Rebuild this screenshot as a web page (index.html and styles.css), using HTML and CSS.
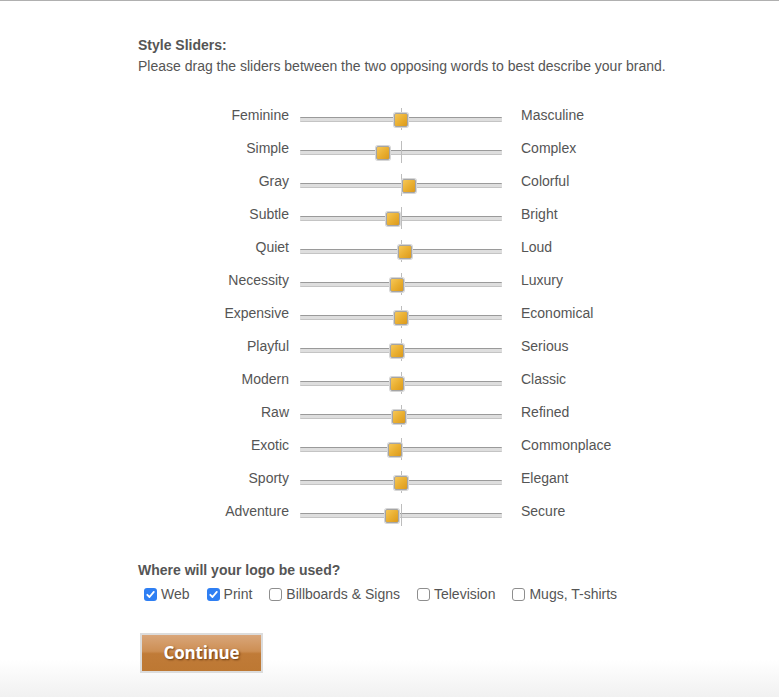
FILE: index.html
```html
<!DOCTYPE html>
<html>
<head>
<meta charset="utf-8">
<link rel="stylesheet" href="styles.css">
</head>
<body>
<div class="page">
  <h2 class="title">Style Sliders:</h2>
  <p class="intro">Please drag the sliders between the two opposing words to best describe your brand.</p>

  <div class="sliders">
    <div class="row"><span class="left">Feminine</span><div class="slider"><span class="bar"></span><span class="tick"></span><span class="thumb" style="left:94px"></span></div><span class="right">Masculine</span></div>
    <div class="row"><span class="left">Simple</span><div class="slider"><span class="bar"></span><span class="tick"></span><span class="thumb" style="left:76px"></span></div><span class="right">Complex</span></div>
    <div class="row"><span class="left">Gray</span><div class="slider"><span class="bar"></span><span class="tick"></span><span class="thumb" style="left:102px"></span></div><span class="right">Colorful</span></div>
    <div class="row"><span class="left">Subtle</span><div class="slider"><span class="bar"></span><span class="tick"></span><span class="thumb" style="left:86px"></span></div><span class="right">Bright</span></div>
    <div class="row"><span class="left">Quiet</span><div class="slider"><span class="bar"></span><span class="tick"></span><span class="thumb" style="left:98px"></span></div><span class="right">Loud</span></div>
    <div class="row"><span class="left">Necessity</span><div class="slider"><span class="bar"></span><span class="tick"></span><span class="thumb" style="left:90px"></span></div><span class="right">Luxury</span></div>
    <div class="row"><span class="left">Expensive</span><div class="slider"><span class="bar"></span><span class="tick"></span><span class="thumb" style="left:94px"></span></div><span class="right">Economical</span></div>
    <div class="row"><span class="left">Playful</span><div class="slider"><span class="bar"></span><span class="tick"></span><span class="thumb" style="left:90px"></span></div><span class="right">Serious</span></div>
    <div class="row"><span class="left">Modern</span><div class="slider"><span class="bar"></span><span class="tick"></span><span class="thumb" style="left:90px"></span></div><span class="right">Classic</span></div>
    <div class="row"><span class="left">Raw</span><div class="slider"><span class="bar"></span><span class="tick"></span><span class="thumb" style="left:92px"></span></div><span class="right">Refined</span></div>
    <div class="row"><span class="left">Exotic</span><div class="slider"><span class="bar"></span><span class="tick"></span><span class="thumb" style="left:88px"></span></div><span class="right">Commonplace</span></div>
    <div class="row"><span class="left">Sporty</span><div class="slider"><span class="bar"></span><span class="tick"></span><span class="thumb" style="left:94px"></span></div><span class="right">Elegant</span></div>
    <div class="row"><span class="left">Adventure</span><div class="slider"><span class="bar"></span><span class="tick"></span><span class="thumb" style="left:85px"></span></div><span class="right">Secure</span></div>
  </div>

  <h2 class="title usage">Where will your logo be used?</h2>
  <div class="checks">
    <label class="check"><span class="box on"><svg viewBox="0 0 13 13" width="13" height="13"><path d="M3.3 6.8 L5.5 9 L9.8 3.9" fill="none" stroke="#fff" stroke-width="1.8" stroke-linecap="round" stroke-linejoin="round"/></svg></span>Web</label>
    <label class="check"><span class="box on"><svg viewBox="0 0 13 13" width="13" height="13"><path d="M3.3 6.8 L5.5 9 L9.8 3.9" fill="none" stroke="#fff" stroke-width="1.8" stroke-linecap="round" stroke-linejoin="round"/></svg></span>Print</label>
    <label class="check"><span class="box"></span>Billboards &amp; Signs</label>
    <label class="check"><span class="box"></span>Television</label>
    <label class="check"><span class="box"></span>Mugs, T-shirts</label>
  </div>

  <button class="continue" type="button">Continue</button>
</div>
</body>
</html>
```

FILE: styles.css
```css
html {
  height: 100%;
  background: linear-gradient(to bottom, #ffffff 0, #ffffff 660px, #f1f1f1 697px);
}

body {
  margin: 0;
  min-height: 100%;
  border-top: 1px solid #b0b0b0;
  box-sizing: border-box;
  font-family: "Liberation Sans", Arial, Helvetica, sans-serif;
  font-size: 14px;
  color: #555555;
}

.page {
  padding: 34px 0 0 138px;
}

.title {
  margin: 0;
  font-size: 14px;
  font-weight: bold;
  line-height: 21px;
  color: #555555;
}

.intro {
  margin: 0;
  line-height: 21px;
}

.sliders {
  margin-top: 22px;
  display: flex;
  flex-direction: column;
}

.row {
  height: 33px;
  display: grid;
  grid-template-columns: 162px 202px auto;
  align-items: center;
}

.left {
  text-align: right;
  line-height: 17px;
  padding-right: 11px;
}

.slider {
  width: 202px;
  height: 22px;
  margin-top: 7px;
  position: relative;
}

.right {
  line-height: 17px;
  padding-left: 19px;
}

.bar {
  position: absolute;
  left: 0;
  right: 0;
  top: 9px;
  height: 3px;
  border-top: 1px solid #9a9a9a;
  border-bottom: 1px solid #c4c4c4;
  background: #dedede;
  border-radius: 1px;
}

.tick {
  position: absolute;
  left: 101px;
  top: 0;
  width: 1px;
  height: 22px;
  background: #bdbdbd;
}

.thumb {
  position: absolute;
  top: 5px;
  width: 12px;
  height: 12px;
  border: 1px solid #a5a5a5;
  border-radius: 2px;
  box-shadow: 0 0 0 1px #d6d6d6;
  background: linear-gradient(135deg, #f6c758 0%, #eab032 50%, #dc9a1c 100%);
}

.usage {
  margin-top: 32px;
}

.checks {
  display: flex;
  align-items: center;
  gap: 17px;
  margin-top: 3px;
  padding-left: 6px;
  line-height: 21px;
}

.check {
  display: flex;
  align-items: center;
  gap: 4px;
}

.box {
  width: 11px;
  height: 11px;
  border: 1px solid #8e8e8e;
  border-radius: 3px;
  background: #ffffff;
  display: flex;
}

.box.on {
  width: 13px;
  height: 13px;
  border: none;
  background: #2f7ff3;
}

.continue {
  display: block;
  margin: 28px 0 0 2px;
  width: 123px;
  height: 40px;
  border: 2px solid #dcdcdc;
  padding: 0 0 2px;
  background: linear-gradient(to bottom, #d9a67a 0%, #cd8f54 45%, #c07b38 52%, #bd7833 100%);
  color: #ffffff;
  font-family: "Open Sans", "DejaVu Sans", sans-serif;
  font-weight: bold;
  font-size: 17px;
  letter-spacing: -0.2px;
  text-shadow: 1px 1px 2px rgba(70, 30, 0, 0.7);
  cursor: pointer;
}
```
